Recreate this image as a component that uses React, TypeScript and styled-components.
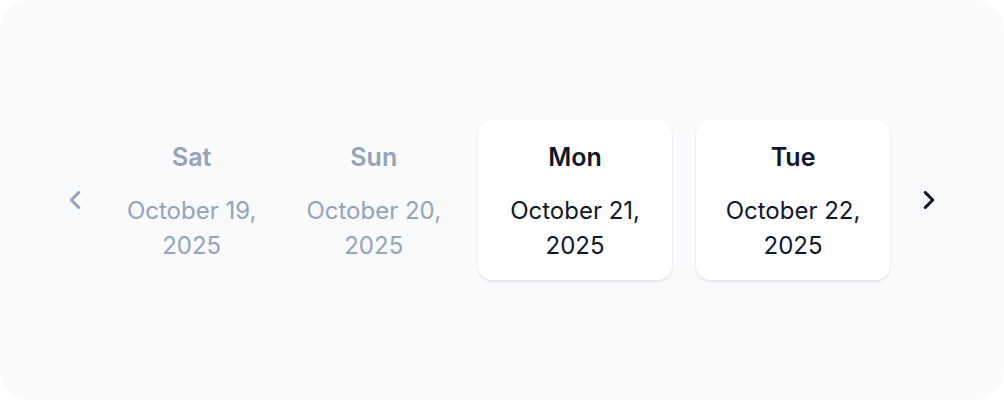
import styled, { createGlobalStyle } from 'styled-components';
import { ChevronLeft, ChevronRight } from 'lucide-react';

const GlobalStyle = createGlobalStyle`
  html, body {
    margin: 0;
    padding: 0;
    background: #ffffff;
  }
  body {
    font-family: Inter, "Noto Sans", sans-serif;
  }
`;

const Panel = styled.div`
  width: 1004px;
  height: 400px;
  box-sizing: border-box;
  background: #f8fafc;
  border-radius: 30px;
  display: flex;
  align-items: center;
  justify-content: center;
  gap: 24px;
`;

const NavButton = styled.button<{ $muted?: boolean }>`
  width: 30px;
  height: 30px;
  padding: 0;
  border: none;
  background: transparent;
  display: flex;
  align-items: center;
  justify-content: center;
  color: ${(p) => (p.$muted ? '#94a3b8' : '#0f172a')};
  cursor: pointer;
`;

const DayCard = styled.div<{ $active?: boolean }>`
  display: flex;
  flex-direction: column;
  align-items: center;
  gap: 20px;
  box-sizing: border-box;
  height: 160px;
  width: ${(p) => (p.$active ? '194px' : 'auto')};
  padding: 21px ${(p) => (p.$active ? '0' : '13px')} 0;
  border-radius: 14px;
  background: ${(p) => (p.$active ? '#ffffff' : 'transparent')};
  box-shadow: ${(p) =>
    p.$active ? '0 1px 3px rgba(15, 23, 42, 0.1), 0 1px 2px rgba(15, 23, 42, 0.04)' : 'none'};
  color: ${(p) => (p.$active ? '#0f172a' : '#94a3b8')};
  text-align: center;
`;

const DayName = styled.div`
  font-size: 25px;
  line-height: 32px;
  font-weight: 600;
`;

const DateText = styled.div`
  font-size: 24px;
  line-height: 35px;
  font-weight: 400;
`;

const days = [
  { name: 'Sat', date: 'October 19,', year: '2025', active: false },
  { name: 'Sun', date: 'October 20,', year: '2025', active: false },
  { name: 'Mon', date: 'October 21,', year: '2025', active: true },
  { name: 'Tue', date: 'October 22,', year: '2025', active: true },
];

const App = () => {
  return (
    <>
      <GlobalStyle />
      <Panel>
        <NavButton $muted aria-label="Previous">
          <ChevronLeft size={30} strokeWidth={2.5} />
        </NavButton>
        {days.map((d) => (
          <DayCard key={d.name} $active={d.active}>
            <DayName>{d.name}</DayName>
            <DateText>
              {d.date}
              <br />
              {d.year}
            </DateText>
          </DayCard>
        ))}
        <NavButton aria-label="Next">
          <ChevronRight size={30} strokeWidth={2.5} />
        </NavButton>
      </Panel>
    </>
  );
};

export default App;
